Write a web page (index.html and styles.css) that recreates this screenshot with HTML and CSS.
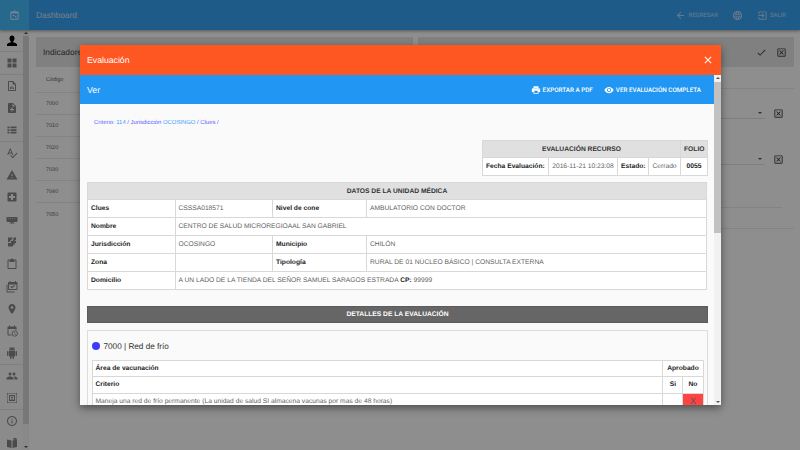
FILE: index.html
```html
<!DOCTYPE html>
<html lang="es">
<head>
    <meta charset="UTF-8">
    <title>Dashboard</title>
    <link rel="stylesheet" href="styles.css">
</head>
<body>
    <svg class="defs" width="0" height="0">
        <symbol id="i-person" viewBox="0 0 24 24"><path d="M12 1c3 0 5 2.400 5 5.500 0 2.500-1 4.800-2.500 6v2c2.500 1 7.500 2 7.500 4.500v3H2v-3c0-2.500 5-3.500 7.500-4.500v-2C8 11.300 7 9 7 6.500 7 3.400 9 1 12 1z"/></symbol>
        <symbol id="i-grid" viewBox="0 0 24 24"><path d="M3 3h8v8H3zm10 0h8v8h-8zM3 13h8v8H3zm10 0h8v8h-8z"/></symbol>
        <symbol id="i-chart" viewBox="0 0 24 24"><path d="M14 2H6c-1.100 0-2 .9-2 2v16c0 1.100.9 2 2 2h12c1.100 0 2-.9 2-2V8l-6-6zm4 18H6V4h7v5h5v11zM8 18v-4h2v4zm3 0v-6h2v6zm3 0v-3h2v3z"/></symbol>
        <symbol id="i-note" viewBox="0 0 24 24"><path d="M14 2H6c-1.100 0-2 .9-2 2v16c0 1.100.9 2 2 2h12c1.100 0 2-.9 2-2V8l-6-6zm2 14h-3v3h-2v-3H8v-2h3v-3h2v3h3v2zm-3-7V3.500L18.500 9H13z"/></symbol>
        <symbol id="i-list" viewBox="0 0 24 24"><path d="M3 5h4v3.500H3zm6 0h12v3.500H9zM3 10.300h4v3.500H3zm6 0h12v3.500H9zM3 15.600h4v3.500H3zm6 0h12v3.500H9z"/></symbol>
        <symbol id="i-spell" viewBox="0 0 24 24"><path d="M12.450 16h2.090L9.430 3H7.570L2.460 16h2.090l1.120-3h5.640l1.140 3zm-6.020-5L8.500 5.480 10.570 11H6.430zm15.160.59l-8.090 8.090L9.830 16l-1.410 1.410 5.090 5.090L23 13l-1.410-1.410z"/></symbol>
        <symbol id="i-warn" viewBox="0 0 24 24"><path d="M1 21h22L12 2 1 21zm12-3h-2v-2h2v2zm0-4h-2v-4h2v4z"/></symbol>
        <symbol id="i-hospital" viewBox="0 0 24 24"><path d="M19 3H5c-1.100 0-1.990.9-1.990 2L3 19c0 1.100.9 2 2 2h14c1.100 0 2-.9 2-2V5c0-1.100-.9-2-2-2zm-1 11h-4v4h-4v-4H6v-4h4V6h4v4h4v4z"/></symbol>
        <symbol id="i-monitor" viewBox="0 0 24 24"><path d="M3 6h18c1 0 2 .8 2 2v6c0 1-1 2-2 2h-6v2h2v1H7v-1h2v-2H3c-1 0-2-1-2-2V8c0-1.200 1-2 2-2zm1 3v1h2V9zm4 0v1h2V9zm4 0v1h2V9zm4 0v1h2V9z"/></symbol>
        <symbol id="i-map" viewBox="0 0 24 24"><path d="M4 3h9v3h-2v3H8v3H4zm11 0h5v5h-5zm-5 7h4V7l6 3v4h-3v3h-3v4H4v-7h6z"/><path d="M14 14h3v3h-3z"/></symbol>
        <symbol id="i-clip" viewBox="0 0 24 24"><path d="M19 3h-4.200C14.400 1.800 13.300 1 12 1s-2.400.8-2.800 2H5c-1.100 0-2 .9-2 2v15c0 1.100.9 2 2 2h14c1.100 0 2-.9 2-2V5c0-1.100-.9-2-2-2zm0 17H5V5h2v3h10V5h2v15z"/></symbol>
        <symbol id="i-cal" viewBox="0 0 24 24"><path d="M3 7H1v14c0 1.100.9 2 2 2h14v-2H3V7zm18-5h-1V0h-2v2H9V0H7v2H6c-1.100 0-2 .9-2 2v12c0 1.100.9 2 2 2h15c1.100 0 2-.9 2-2V4c0-1.100-.9-2-2-2zm0 14H6V7h15v9zm-9.500-1.500L8.500 11.500 10 10l1.500 1.500L16.500 8l1.500 1.500z"/></symbol>
        <symbol id="i-place" viewBox="0 0 24 24"><path d="M12 2C8.130 2 5 5.130 5 9c0 5.250 7 13 7 13s7-7.750 7-13c0-3.870-3.130-7-7-7zm0 9.500c-1.380 0-2.500-1.120-2.500-2.500s1.120-2.500 2.500-2.500 2.500 1.120 2.500 2.500-1.120 2.500-2.500 2.500z"/></symbol>
        <symbol id="i-clock" viewBox="0 0 24 24"><path d="M19 3h-1V1h-2v2H8V1H6v2H5c-1.100 0-2 .9-2 2v14c0 1.100.9 2 2 2h6v-2H5V8h14v2h2V5c0-1.100-.9-2-2-2z"/><path d="M17.500 11a6 6 0 1 0 0 12 6 6 0 0 0 0-12zm0 10.500a4.500 4.500 0 1 1 0-9 4.500 4.500 0 0 1 0 9zm.5-7.500h-1.200v4l3 1.500.5-1-2.300-1.200z"/></symbol>
        <symbol id="i-android" viewBox="0 0 24 24"><path d="M6 18c0 .55.45 1 1 1h1v3.500c0 .83.67 1.500 1.500 1.500s1.500-.67 1.500-1.500V19h2v3.500c0 .83.67 1.500 1.500 1.500s1.500-.67 1.500-1.500V19h1c.55 0 1-.45 1-1V8H6v10zM3.500 8C2.670 8 2 8.670 2 9.500v7c0 .83.67 1.500 1.500 1.500S5 17.330 5 16.500v-7C5 8.670 4.330 8 3.500 8zm17 0c-.83 0-1.500.67-1.500 1.500v7c0 .83.67 1.500 1.500 1.500s1.500-.67 1.500-1.500v-7c0-.83-.67-1.500-1.500-1.500zm-4.970-5.840l1.300-1.300c.2-.2.2-.51 0-.71-.2-.2-.51-.2-.71 0l-1.480 1.480C13.850 1.230 12.950 1 12 1c-.96 0-1.860.23-2.660.63L7.850.15c-.2-.2-.51-.2-.71 0-.2.2-.2.51 0 .71l1.310 1.310C6.970 3.260 6 5.010 6 7h12c0-1.990-.97-3.750-2.470-4.840zM10 5H9V4h1v1zm5 0h-1V4h1v1z"/></symbol>
        <symbol id="i-people" viewBox="0 0 24 24"><path d="M16 11c1.660 0 2.990-1.340 2.990-3S17.660 5 16 5c-1.660 0-3 1.340-3 3s1.340 3 3 3zm-8 0c1.660 0 2.990-1.340 2.990-3S9.660 5 8 5C6.340 5 5 6.340 5 8s1.340 3 3 3zm0 2c-2.330 0-7 1.170-7 3.500V19h14v-2.500c0-2.330-4.670-3.500-7-3.500zm8 0c-.29 0-.62.02-.97.05 1.160.84 1.970 1.970 1.970 3.450V19h6v-2.500c0-2.330-4.670-3.500-7-3.500z"/></symbol>
        <symbol id="i-frame" viewBox="0 0 24 24"><path d="M2 2h3v2H4v1H2zm5 0h2v2H7zm4 0h2v2h-2zm4 0h2v2h-2zm4 0h3v3h-2V4h-1zM2 7h2v2H2zm18 0h2v2h-2zM2 11h2v2H2zm18 0h2v2h-2zM2 15h2v2H2zm18 0h2v2h-2zM2 19h2v1h1v2H2zm5 1h2v2H7zm4 0h2v2h-2zm4 0h2v2h-2zm5-1h2v3h-3v-2h1zM6 6h12v12H6zm2 2v8h8V8zm4 1a2 2 0 1 1 0 4 2 2 0 0 1 0-4zm-3 6.500c0-1 2-1.500 3-1.500s3 .5 3 1.500z"/></symbol>
        <symbol id="i-info" viewBox="0 0 24 24"><path d="M11 7h2v2h-2zm0 4h2v6h-2zm1-9C6.480 2 2 6.480 2 12s4.480 10 10 10 10-4.480 10-10S17.520 2 12 2zm0 18c-4.410 0-8-3.590-8-8s3.590-8 8-8 8 3.590 8 8-3.590 8-8 8z"/></symbol>
        <symbol id="i-book" viewBox="0 0 24 24"><path d="M2 5l9 2v15l-9-2zm20 0v15l-9 2V7zM15 2h6v3l-6 1z"/></symbol>
        <symbol id="i-assign" viewBox="0 0 24 24"><path d="M19 3h-4.200C14.400 1.800 13.300 1 12 1s-2.400.8-2.800 2H5c-1.100 0-2 .9-2 2v14c0 1.100.9 2 2 2h14c1.100 0 2-.9 2-2V5c0-1.100-.9-2-2-2zm0 16H5V7h14v12zM12 3a1 1 0 1 1 0 2 1 1 0 0 1 0-2zm-4 8h4v2H8zm5 2h3v3h-3z"/></symbol>
        <symbol id="i-print" viewBox="0 0 24 24"><path d="M19 8H5c-1.660 0-3 1.340-3 3v6h4v4h12v-4h4v-6c0-1.660-1.340-3-3-3zm-3 11H8v-5h8v5zm3-7c-.55 0-1-.45-1-1s.45-1 1-1 1 .45 1 1-.45 1-1 1zm-1-9H6v4h12V3z"/></symbol>
        <symbol id="i-eye" viewBox="0 0 24 24"><path d="M12 4.500C7 4.500 2.730 7.610 1 12c1.730 4.390 6 7.500 11 7.500s9.270-3.110 11-7.500c-1.730-4.390-6-7.500-11-7.500zM12 17c-2.760 0-5-2.240-5-5s2.240-5 5-5 5 2.240 5 5-2.240 5-5 5zm0-8c-1.660 0-3 1.340-3 3s1.340 3 3 3 3-1.340 3-3-1.340-3-3-3z"/></symbol>
        <symbol id="i-close" viewBox="0 0 24 24"><path d="M19 6.410L17.590 5 12 10.590 6.410 5 5 6.410 10.590 12 5 17.590 6.410 19 12 13.410 17.590 19 19 17.590 13.410 12z"/></symbol>
        <symbol id="i-back" viewBox="0 0 24 24"><path d="M20 11H7.830l5.590-5.590L12 4l-8 8 8 8 1.410-1.410L7.830 13H20v-2z"/></symbol>
        <symbol id="i-globe" viewBox="0 0 24 24"><path d="M11.990 2C6.470 2 2 6.480 2 12s4.470 10 9.990 10C17.520 22 22 17.520 22 12S17.520 2 11.990 2zm6.930 6h-2.950c-.32-1.250-.78-2.450-1.380-3.560 1.840.63 3.370 1.910 4.330 3.560zM12 4.040c.83 1.200 1.480 2.530 1.910 3.960h-3.820c.43-1.430 1.080-2.760 1.910-3.960zM4.260 14C4.100 13.360 4 12.690 4 12s.1-1.360.26-2h3.380c-.08.66-.14 1.320-.14 2 0 .68.06 1.340.14 2H4.260zm.82 2h2.950c.32 1.250.78 2.450 1.380 3.560-1.840-.63-3.370-1.900-4.330-3.560zm2.950-8H5.080c.96-1.660 2.490-2.930 4.330-3.560C8.810 5.550 8.350 6.750 8.030 8zM12 19.960c-.83-1.200-1.480-2.530-1.910-3.960h3.820c-.43 1.430-1.080 2.760-1.910 3.960zM14.340 14H9.660c-.09-.66-.16-1.320-.16-2 0-.68.07-1.350.16-2h4.680c.09.65.16 1.320.16 2 0 .68-.07 1.340-.16 2zm.25 5.560c.6-1.110 1.060-2.310 1.380-3.560h2.950c-.96 1.650-2.490 2.930-4.330 3.560zM16.360 14c.08-.66.14-1.320.14-2 0-.68-.06-1.340-.14-2h3.380c.16.64.26 1.310.26 2s-.1 1.360-.26 2h-3.380z"/></symbol>
        <symbol id="i-exit" viewBox="0 0 24 24"><path d="M10.090 15.590L11.500 17l5-5-5-5-1.410 1.410L12.670 11H3v2h9.670l-2.580 2.590zM19 3H5c-1.110 0-2 .9-2 2v4h2V5h14v14H5v-4H3v4c0 1.100.89 2 2 2h14c1.100 0 2-.9 2-2V5c0-1.100-.9-2-2-2z"/></symbol>
        <symbol id="i-done" viewBox="0 0 24 24"><path d="M9 16.170L4.830 12l-1.410 1.410L9 19 21 7l-1.410-1.410z"/></symbol>
        <symbol id="i-xbox" viewBox="0 0 24 24"><path d="M19 3H5c-1.100 0-2 .9-2 2v14c0 1.100.9 2 2 2h14c1.100 0 2-.9 2-2V5c0-1.100-.9-2-2-2zm0 16H5V5h14v14zM17 8.400L15.600 7 12 10.600 8.400 7 7 8.400l3.600 3.600L7 15.600 8.400 17l3.600-3.600 3.600 3.600 1.400-1.400-3.600-3.600z"/></symbol>
    </svg>

    <div class="app">
        <header class="topbar">
            <div class="brand"><svg class="icon brand-icon"><use href="#i-assign"/></svg></div>
            <div class="topbar-title">Dashboard</div>
            <nav class="topbar-actions">
                <span class="top-link"><svg class="icon top-icon"><use href="#i-back"/></svg>REGRESAR</span>
                <span class="top-link"><svg class="icon top-icon"><use href="#i-globe"/></svg></span>
                <span class="top-link"><svg class="icon top-icon"><use href="#i-exit"/></svg>SALIR</span>
            </nav>
        </header>
        <div class="app-body">
            <aside class="sidebar">
                <ul class="side-menu">
                    <li class="side-item sep side-person"><svg class="icon side-icon"><use href="#i-person"/></svg></li>
                    <li class="side-item sep"><svg class="icon side-icon"><use href="#i-grid"/></svg></li>
                    <li class="side-item"><svg class="icon side-icon"><use href="#i-chart"/></svg></li>
                    <li class="side-item"><svg class="icon side-icon"><use href="#i-note"/></svg></li>
                    <li class="side-item sep"><svg class="icon side-icon"><use href="#i-list"/></svg></li>
                    <li class="side-item"><svg class="icon side-icon"><use href="#i-spell"/></svg></li>
                    <li class="side-item"><svg class="icon side-icon"><use href="#i-warn"/></svg></li>
                    <li class="side-item"><svg class="icon side-icon"><use href="#i-hospital"/></svg></li>
                    <li class="side-item"><svg class="icon side-icon"><use href="#i-monitor"/></svg></li>
                    <li class="side-item"><svg class="icon side-icon"><use href="#i-map"/></svg></li>
                    <li class="side-item"><svg class="icon side-icon"><use href="#i-clip"/></svg></li>
                    <li class="side-item"><svg class="icon side-icon"><use href="#i-cal"/></svg></li>
                    <li class="side-item"><svg class="icon side-icon"><use href="#i-place"/></svg></li>
                    <li class="side-item"><svg class="icon side-icon"><use href="#i-clock"/></svg></li>
                    <li class="side-item sep"><svg class="icon side-icon"><use href="#i-android"/></svg></li>
                    <li class="side-item"><svg class="icon side-icon"><use href="#i-people"/></svg></li>
                    <li class="side-item sep"><svg class="icon side-icon"><use href="#i-frame"/></svg></li>
                    <li class="side-item"><svg class="icon side-icon"><use href="#i-info"/></svg></li>
                    <li class="side-item"><svg class="icon side-icon"><use href="#i-book"/></svg></li>
                </ul>
                <div class="side-scroll">
                    <span class="arrow-up"></span>
                    <span class="side-thumb"></span>
                    <span class="arrow-down"></span>
                </div>
            </aside>
            <main class="content">
                <section class="card">
                    <div class="card-head">Indicadores</div>
                    <div class="code-row code-head">Código</div>
                    <div class="code-row">7000</div>
                    <div class="code-row">7010</div>
                    <div class="code-row">7020</div>
                    <div class="code-row">7030</div>
                    <div class="code-row">7040</div>
                    <div class="code-row code-last">7050</div>
                </section>
                <section class="card">
                    <div class="card-head card-head-end">
                        <svg class="icon card-icon"><use href="#i-done"/></svg>
                        <svg class="icon card-icon"><use href="#i-xbox"/></svg>
                    </div>
                    <div class="rule"></div>
                    <div class="filter-list">
                        <div class="filter"><span class="filter-select"><span class="caret"></span></span><svg class="icon card-icon"><use href="#i-xbox"/></svg></div>
                        <div class="filter"><span class="filter-select"><span class="caret"></span></span><svg class="icon card-icon"><use href="#i-xbox"/></svg></div>
                    </div>
                    <div class="rule rule-low"></div>
                    <div class="rule"></div>
                </section>
            </main>
        </div>
    </div>

    <div class="backdrop"></div>

    <div class="dialog">
        <div class="dialog-head">
            <span>Evaluación</span>
            <svg class="icon close-icon"><use href="#i-close"/></svg>
        </div>
        <div class="dialog-main">
            <div class="dialog-scroll">
                <div class="toolbar">
                    <span class="toolbar-title">Ver</span>
                    <span class="toolbar-actions">
                        <span class="tool-btn"><svg class="icon tool-icon"><use href="#i-print"/></svg>EXPORTAR A PDF</span>
                        <span class="tool-btn"><svg class="icon tool-icon"><use href="#i-eye"/></svg>VER EVALUACIÓN COMPLETA</span>
                    </span>
                </div>
                <div class="dialog-body">
                    <p class="crumbs">
                        <span class="c-purple">Criterio:</span>
                        <span class="c-blue">114</span>
                        <span class="c-purple">/ Jurisdicción</span>
                        <span class="c-blue">OCOSINGO</span>
                        <span class="c-purple">/ Clues /</span>
                    </p>

                    <table class="grid grid-eval">
                        <colgroup>
                            <col class="w-fecha"><col class="w-date"><col class="w-estado"><col class="w-cerrado"><col>
                        </colgroup>
                        <tr>
                            <th class="head" colspan="4">EVALUACIÓN RECURSO</th>
                            <th class="head">FOLIO</th>
                        </tr>
                        <tr>
                            <th>Fecha Evaluación:</th>
                            <td class="center">2016-11-21 10:23:08</td>
                            <th>Estado:</th>
                            <td class="center">Cerrado</td>
                            <th class="center">0055</th>
                        </tr>
                    </table>

                    <table class="grid grid-unit">
                        <colgroup>
                            <col class="w-a"><col class="w-b"><col class="w-c"><col>
                        </colgroup>
                        <tr><th class="head" colspan="4">DATOS DE LA UNIDAD MÉDICA</th></tr>
                        <tr><th>Clues</th><td>CSSSA018571</td><th>Nivel de cone</th><td>AMBULATORIO CON DOCTOR</td></tr>
                        <tr><th>Nombre</th><td colspan="3">CENTRO DE SALUD MICROREGIOAAL SAN GABRIEL</td></tr>
                        <tr><th>Jurisdicción</th><td>OCOSINGO</td><th>Municipio</th><td>CHILÓN</td></tr>
                        <tr><th>Zona</th><td></td><th>Tipología</th><td>RURAL DE 01 NÚCLEO BÁSICO | CONSULTA EXTERNA</td></tr>
                        <tr><th>Domicilio</th><td colspan="3">A UN LADO DE LA TIENDA DEL SEÑOR SAMUEL SARAGOS ESTRADA <b>CP:</b> 99999</td></tr>
                    </table>

                    <div class="section-bar">DETALLES DE LA EVALUACIÓN</div>

                    <div class="panel">
                        <div class="panel-title"><span class="dot"></span>7000 | Red de frío</div>
                        <table class="grid grid-crit">
                            <colgroup>
                                <col><col class="w-si"><col class="w-no">
                            </colgroup>
                            <tr><th>Área de vacunación</th><th class="center" colspan="2">Aprobado</th></tr>
                            <tr><th>Criterio</th><th class="center">Si</th><th class="center">No</th></tr>
                            <tr><td>Maneja una red de frío permanente (La unidad de salud SI almacena vacunas por mas de 48 horas)</td><td></td><td class="center cell-no">X</td></tr>
                        </table>
                    </div>
                </div>
            </div>
            <div class="scrollbar">
                <span class="arrow-up"></span>
                <span class="scroll-thumb"></span>
                <span class="arrow-down"></span>
            </div>
        </div>
    </div>
</body>
</html>
```

FILE: styles.css
```css
*,
*::before,
*::after {
    box-sizing: border-box;
    padding: 0;
    margin: 0;
}

body {
    width: 800px;
    height: 450px;
    overflow: hidden;
    background: #fafafa;
    font-family: "Liberation Sans", Arial, sans-serif;
    color: #333;
    text-rendering: geometricPrecision;
}

.defs {
    position: absolute;
}

.icon {
    display: block;
    flex: none;
    fill: currentColor;
}

/* app behind the dialog */
.app {
    display: flex;
    flex-direction: column;
    height: 450px;
}

.topbar {
    display: flex;
    align-items: center;
    flex: none;
    height: 30px;
    background: #38a0f0;
    color: #fff;
    box-shadow: 0 1px 3px rgba(0,0,0,.4);
    position: relative;
}

.brand {
    display: flex;
    align-items: center;
    justify-content: center;
    width: 29px;
    height: 100%;
    background: #45b8f8;
}

.brand-icon {
    width: 11px;
    height: 11px;
    opacity: .75;
}

.topbar-title {
    margin-left: 7px;
    font-size: 8.400px;
    opacity: .7;
}

.topbar-actions {
    display: flex;
    align-items: center;
    gap: 14px;
    margin-left: auto;
    margin-right: 14px;
    font-family: Roboto, sans-serif;
    font-size: 6px;
    opacity: .6;
}

.top-link {
    display: flex;
    align-items: center;
    gap: 2px;
}

.top-icon {
    width: 11px;
    height: 11px;
}

.app-body {
    display: flex;
    flex: 1;
    min-height: 0;
}

.sidebar {
    display: flex;
    flex: none;
    width: 29px;
    background: #f5f5f5;
    color: #333;
}

.side-menu {
    flex: 1;
    list-style: none;
}

.side-item {
    display: flex;
    align-items: center;
    justify-content: center;
    height: 22.330px;
    color: #858585;
}

.side-item.sep {
    border-bottom: 1px solid #e0e0e0;
}

.side-item.side-person {
    color: #000;
}

.side-icon {
    width: 12px;
    height: 12px;
}

.side-scroll,
.scrollbar {
    display: flex;
    flex-direction: column;
    align-items: center;
    flex: none;
    width: 6px;
    background: #f1f1f1;
}

.side-thumb {
    display: block;
    width: 100%;
    height: 388px;
    background: #d4d4d4;
}

.arrow-up,
.arrow-down {
    display: block;
    flex: none;
    width: 0;
    height: 0;
    margin: 2px 0;
    border-left: 2px solid transparent;
    border-right: 2px solid transparent;
}

.arrow-up {
    border-bottom: 2px solid #505050;
}

.arrow-down {
    margin-top: auto;
    border-top: 2px solid #505050;
}

.content {
    display: flex;
    flex: 1;
    gap: 5px;
    padding: 7px 6px 0 7px;
}

.card {
    flex: 1;
}

.card-head {
    display: flex;
    align-items: center;
    height: 30px;
    padding-left: 7px;
    background: #e2e2e2;
    font-size: 8.400px;
    color: #444;
}

.card-head-end {
    justify-content: flex-end;
    gap: 9px;
    padding-right: 7px;
}

.card-icon {
    width: 11px;
    height: 11px;
    color: #444;
}

.code-row {
    display: flex;
    align-items: center;
    height: 22px;
    padding: 1px 0 0 10px;
    border-bottom: 1px solid #e6e6e6;
    font-size: 5.500px;
    color: #666;
}

.code-head {
    height: 26px;
}

.code-last {
    border-bottom: 0;
}

.filter-list {
    display: flex;
    flex-direction: column;
    gap: 35px;
    padding: 19px 10px 0 0;
}

.filter {
    display: flex;
    align-items: center;
    gap: 8px;
    height: 11px;
}

.filter-select {
    display: flex;
    justify-content: flex-end;
    align-items: center;
    flex: 1;
    height: 11px;
    padding-right: 3px;
    border-bottom: 1px solid #ddd;
}

.caret {
    width: 0;
    height: 0;
    border-left: 2.500px solid transparent;
    border-right: 2.500px solid transparent;
    border-top: 2.500px solid #555;
}

.rule {
    height: 21.500px;
    border-bottom: 1px solid #e6e6e6;
}

.rule-low {
    height: 43px;
    margin-right: 12px;
}

/* dialog */
.backdrop {
    position: absolute;
    inset: 0;
    background: rgba(0,0,0,.43);
}

.dialog {
    position: absolute;
    left: 80px;
    top: 45px;
    display: flex;
    flex-direction: column;
    width: 641px;
    height: 360px;
    overflow: hidden;
    background: #fafafa;
    box-shadow: 0 3px 8px rgba(0,0,0,.45);
}

.dialog-head {
    display: flex;
    align-items: center;
    justify-content: space-between;
    flex: none;
    height: 29.500px;
    padding: 0 7px;
    background: #ff5722;
    color: #fff;
    font-size: 8.700px;
}

.close-icon {
    width: 12px;
    height: 12px;
}

.dialog-main {
    display: flex;
    flex: 1;
    min-height: 0;
}

.dialog-scroll {
    flex: 1;
    min-width: 0;
    overflow: hidden;
}

.scrollbar {
    width: 7px;
}

.scroll-thumb {
    display: block;
    width: 100%;
    height: 151px;
    margin-top: 1px;
    background: #c1c1c1;
}

.toolbar {
    display: flex;
    align-items: center;
    justify-content: space-between;
    height: 29px;
    margin-top: .5px;
    padding: 0 13px 0 7px;
    background: #2196f3;
    color: #fff;
}

.toolbar-title {
    font-size: 8.700px;
}

.toolbar-actions {
    display: flex;
    gap: 11.500px;
    font-family: Roboto, sans-serif;
    font-weight: 500;
    font-size: 6.300px;
}

.tool-btn {
    display: flex;
    align-items: center;
    gap: 1.500px;
}

.tool-icon {
    width: 10px;
    height: 10px;
}

.dialog-body {
    padding: 0 6px 0 7px;
}

.crumbs {
    height: 36px;
    padding: 14.500px 0 0 7px;
    font-size: 5.900px;
    line-height: 8px;
}

.c-purple {
    color: #5c5cff;
}

.c-blue {
    color: #3b9df5;
}

.grid {
    border-collapse: collapse;
    background: #fff;
    font-size: 6.700px;
    table-layout: fixed;
}

.grid th,
.grid td {
    height: 18px;
    padding: 0 3px;
    border: 1px solid #d8d8d8;
    text-align: left;
    overflow: hidden;
    white-space: nowrap;
}

.grid td {
    font-weight: normal;
    color: #5f5f5f;
}

.grid th {
    color: #222;
}

.grid .head {
    height: 17px;
    background: #e0e0e0;
    text-align: center;
    color: #333;
}

.grid .center {
    text-align: center;
}

.grid-eval {
    width: 226px;
    margin: 0 0 6px auto;
}

.w-fecha { width: 66px; }
.w-date { width: 69px; }
.w-estado { width: 31px; }
.w-cerrado { width: 32px; }

.grid-unit {
    width: 620px;
}

.grid-unit td b {
    color: #222;
}

.w-a { width: 87.500px; }
.w-b { width: 97.500px; }
.w-c { width: 94px; }

.section-bar {
    display: flex;
    align-items: center;
    justify-content: center;
    height: 17px;
    margin-top: 15.500px;
    background: #666;
    border: 1px solid #5c5c5c;
    color: #fff;
    font-size: 6.700px;
    font-weight: bold;
}

.panel {
    height: 120px;
    margin-top: 7px;
    padding: 0 3.500px;
    border: 1px solid #ddd;
}

.panel-title {
    display: flex;
    align-items: center;
    gap: 4px;
    height: 29px;
    padding-top: 2px;
    font-size: 8.200px;
    color: #333;
}

.dot {
    width: 8px;
    height: 8px;
    border-radius: 50%;
    background: #3c3cff;
}

.grid-crit {
    width: 612px;
}

.grid-crit th,
.grid-crit td {
    height: 16.500px;
}

.w-si,
.w-no {
    width: 20px;
}

.grid-crit .cell-no {
    background: #f44;
    color: #555;
    font-size: 9px;
}
```
